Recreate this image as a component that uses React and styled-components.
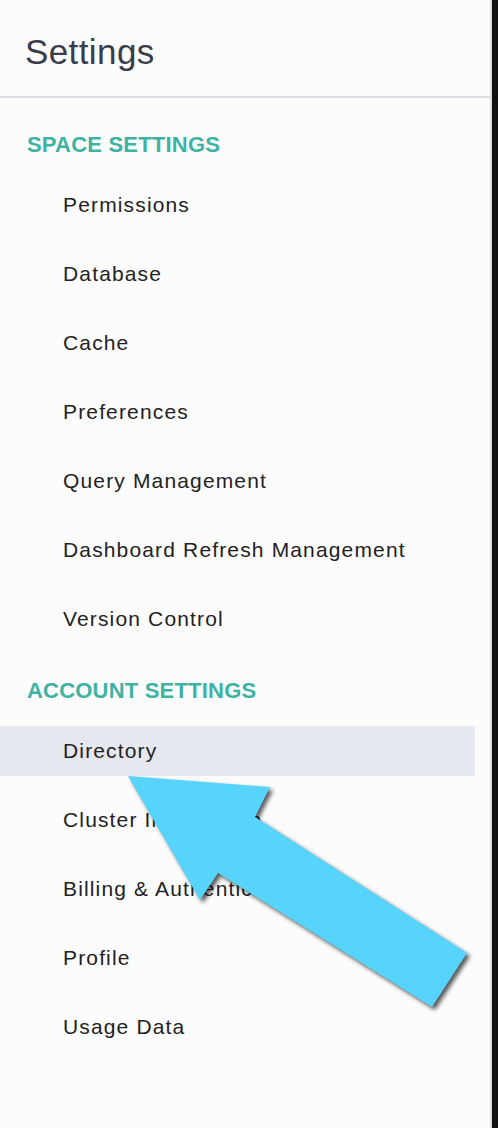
import React from "react";
import styled, { createGlobalStyle } from "styled-components";

const GlobalStyle = createGlobalStyle`
  html, body {
    margin: 0;
    padding: 0;
    background: #101010;
  }
  body {
    font-family: "Liberation Sans", Arial, sans-serif;
  }
`;

const sections = [
  {
    title: "SPACE SETTINGS",
    items: [
      "Permissions",
      "Database",
      "Cache",
      "Preferences",
      "Query Management",
      "Dashboard Refresh Management",
      "Version Control",
    ],
  },
  {
    title: "ACCOUNT SETTINGS",
    items: [
      "Directory",
      "Cluster Information",
      "Billing & Authentication",
      "Profile",
      "Usage Data",
    ],
  },
];

export default function App() {
  return (
    <>
      <GlobalStyle />
      <Page>
        <Panel>
          <Header>
            <h1>Settings</h1>
          </Header>
          {sections.map((section) => (
            <Section key={section.title}>
              <SectionTitle>{section.title}</SectionTitle>
              <List>
                {section.items.map((item) => (
                  <Row key={item} selected={item === "Directory"}>
                    {item}
                  </Row>
                ))}
              </List>
            </Section>
          ))}
          <Arrow viewBox="0 0 498 1128" aria-hidden="true">
            <polygon points="128,776 270,787 255,817 467,953 432,1007 218,873 200,900" />
          </Arrow>
        </Panel>
      </Page>
    </>
  );
}

const Page = styled.div`
  width: 498px;
  height: 1128px;
  display: flex;
  background: #101010;
  overflow: hidden;
`;

const Panel = styled.div`
  position: relative;
  width: 490px;
  height: 1128px;
  background: #fcfcfd;
  border-right: 2px solid #d9dce3;
  display: flex;
  flex-direction: column;
`;

const Header = styled.div`
  height: 96px;
  border-bottom: 2px solid #d9dce3;
  display: flex;
  align-items: center;
  padding-left: 25px;
  h1 {
    margin: 0;
    margin-top: 8px;
    font-size: 35px;
    font-weight: 400;
    color: #3a3c4b;
    letter-spacing: 0.4px;
  }
`;

const Section = styled.div`
  padding-top: 35px;
`;

const SectionTitle = styled.div`
  padding-left: 27px;
  height: 24px;
  line-height: 24px;
  font-size: 22px;
  font-weight: 700;
  color: #3eb3a3;
  letter-spacing: 0.2px;
  margin-bottom: 23px;
`;

const List = styled.div`
  display: flex;
  flex-direction: column;
  gap: 19px;
`;

const Row = styled.div`
  width: 475px;
  height: 50px;
  box-sizing: border-box;
  padding-left: 63px;
  display: flex;
  align-items: center;
  font-size: 21px;
  letter-spacing: 1.15px;
  color: #222222;
  background: ${(p) => (p.selected ? "#e5e8ee" : "transparent")};
  white-space: nowrap;
`;

const Arrow = styled.svg`
  position: absolute;
  left: 0;
  top: 0;
  width: 498px;
  height: 1128px;
  pointer-events: none;
  filter: drop-shadow(3px 3px 2px rgba(0, 0, 0, 0.65));
  polygon {
    fill: #57d4fb;
  }
`;
